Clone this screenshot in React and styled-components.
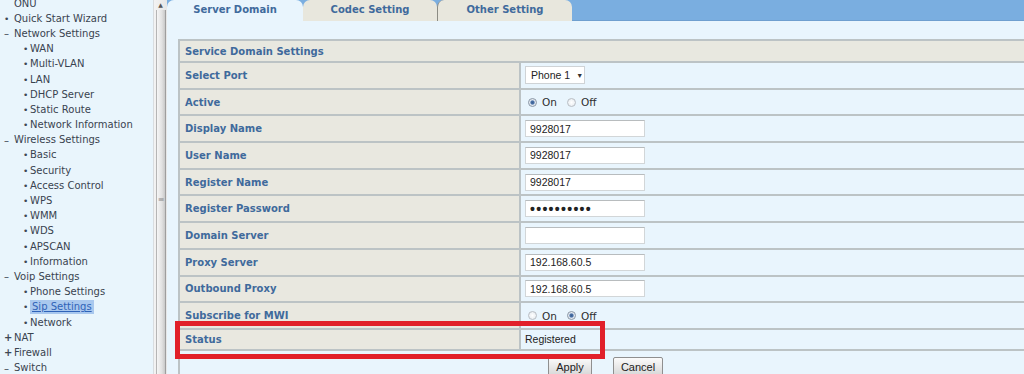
import React from "react";
import styled, { createGlobalStyle } from "styled-components";

const GlobalStyle = createGlobalStyle`
  html, body { margin: 0; padding: 0; background: #e9f5fd; overflow: hidden; }
  * { box-sizing: border-box; }
`;

const Page = styled.div`
  display: flex;
  width: 1024px;
  height: 374px;
  overflow: hidden;
  background: #e9f5fd;
  font-family: "DejaVu Sans", Verdana, sans-serif;
`;

const Sidebar = styled.nav`
  width: 153px;
  flex: none;
  background: #e9f5fc;
  overflow: hidden;
`;

const NavList = styled.ul`
  list-style: none;
  margin: -4px 0 0 0;
  padding: 0;
`;

const NavItem = styled.li`
  display: flex;
  align-items: center;
  height: 15.2px;
  padding-left: ${(p) => (p.$sub ? 23 : 4)}px;
  font-size: 10px;
  color: #39434f;
  white-space: nowrap;
`;

const Marker = styled.span`
  display: inline-block;
  width: ${(p) => (p.$sub ? 7 : 10)}px;
  font-size: ${(p) => (p.$kind === "dot" ? 9 : 10)}px;
  font-weight: ${(p) => (p.$kind === "plus" ? 700 : 400)};
  color: #3d4753;
  text-align: left;
`;

const NavLabel = styled.span`
  padding: 0 ${(p) => (p.$active ? 2 : 0)}px;
  background: ${(p) => (p.$active ? "#a9c8ee" : "transparent")};
  color: ${(p) => (p.$active ? "#2f63b8" : "inherit")};
  text-decoration: ${(p) => (p.$active ? "underline" : "none")};
  line-height: 14px;
`;

const Scrollbar = styled.div`
  width: 14px;
  flex: none;
  display: flex;
  flex-direction: column;
  background: linear-gradient(to right, #f3f3f3, #e6e6e6);
  border-left: 1px solid #d9dde0;
`;

const ScrollArrow = styled.div`
  height: 10px;
  display: flex;
  align-items: center;
  justify-content: center;
  color: #555;
  font-size: 6px;
  line-height: 1;
`;

const ScrollThumb = styled.div`
  flex: 1;
  margin: 0 1px 0 2px;
  background: linear-gradient(to right, #f6f6f6, #e2e2e2 60%, #c9c9c9);
  border-left: 1px solid #b5b5b5;
  border-right: 1px solid #9e9e9e;
  display: flex;
  justify-content: center;
  padding-top: 185px;
  color: #8a8a8a;
  font-size: 8px;
`;

const Main = styled.main`
  flex: 1;
  position: relative;
  display: flex;
  flex-direction: column;
  overflow: hidden;
  min-width: 0;
`;

const TabStrip = styled.div`
  height: 21px;
  flex: none;
  display: flex;
  background: #7aaee0;
  border-bottom: 1px solid #6f9fcf;
`;

const Tab = styled.div`
  width: ${(p) => p.$w}px;
  height: 21px;
  display: flex;
  align-items: center;
  justify-content: center;
  border-radius: 7px 7px 0 0;
  background: ${(p) => (p.$active ? "#e9f5fd" : "#e8e7dd")};
  border-left: ${(p) => (p.$divider ? "1px solid #8c8c84" : "none")};
  font-size: 10px;
  font-weight: 700;
  color: #3f6a9c;
  padding-bottom: 2px;
`;

const Content = styled.div`
  padding: 18px 0 0 11px;
`;

const Table = styled.table`
  border-collapse: collapse;
  width: 900px;
  table-layout: fixed;
`;

const LabelCol = styled.col`
  width: 341px;
`;

const Row = styled.tr`
  height: ${(p) => p.$h}px;
`;

const HeadCell = styled.td`
  background: #e8e8e0;
  border: 2px solid #bcc3c5;
  padding: 0 0 0 5px;
  font-size: 10px;
  font-weight: 700;
  color: #3f6a9c;
`;

const LabelCell = styled.td`
  background: #e9e8e0;
  border: 2px solid #bcc3c5;
  padding: 0 0 0 5px;
  font-size: 10px;
  font-weight: 700;
  color: #3f6a9c;
  white-space: nowrap;
`;

const ValueCell = styled.td`
  background: #e9f5fd;
  border: 2px solid #bcc3c5;
  padding: 0 0 0 4px;
  font-family: "Liberation Sans", Arial, sans-serif;
  font-size: 10.5px;
  color: #222;
`;

const ActionCell = styled.td`
  background: #e9f5fd;
  border-left: 2px solid #bcc3c5;
  vertical-align: top;
  padding: 5px 0 0 368px;
`;

const Field = styled.input`
  display: block;
  width: 120px;
  height: 17px;
  margin: 0;
  padding: 0 4px;
  background: #fff;
  border: 1px solid #d2d6d8;
  border-top-color: #b8bcbe;
  font-family: "Liberation Sans", Arial, sans-serif;
  font-size: ${(p) => (p.$secret ? 14 : 10.5)}px;
  letter-spacing: ${(p) => (p.$secret ? 1.3 : 0)}px;
  font-weight: ${(p) => (p.$secret ? 700 : 400)};
  color: #222;
  outline: none;
`;

const SelectBox = styled.div`
  display: inline-flex;
  align-items: center;
  gap: 6px;
  width: 60px;
  height: 18px;
  padding: 0 0 0 5px;
  background: #fff;
  border: 1px solid #cfd3d6;
  font-family: "Liberation Sans", Arial, sans-serif;
  font-size: 10.5px;
  color: #222;
`;

const Caret = styled.span`
  font-size: 7px;
  color: #333;
`;

const RadioGroup = styled.div`
  display: flex;
  align-items: center;
  font-family: "DejaVu Sans", Verdana, sans-serif;
  font-size: 10.5px;
  color: #2e2e2e;
`;

const RadioDot = styled.span`
  display: inline-block;
  width: 9px;
  height: 9px;
  border-radius: 50%;
  margin: 0 5px 0 3px;
  border: 1px solid ${(p) => (p.$on ? "#8a97a6" : "#b9bfc5")};
  background: ${(p) =>
    p.$on
      ? "radial-gradient(circle, #3b5f91 0, #4a72a8 1.6px, #dfe6ee 2.6px, #f5f7f9 100%)"
      : "radial-gradient(circle, #ffffff 0, #eef1f4 60%, #d6dbe0 100%)"};
`;

const RadioText = styled.span`
  margin-right: 7px;
`;

const Button = styled.button`
  height: 20px;
  width: ${(p) => p.$w}px;
  margin-right: 21px;
  padding: 0;
  border: 1px solid #8f8f8f;
  border-radius: 2px;
  background: linear-gradient(#fbfbfb, #e6e6e6 55%, #d6d6d6);
  font-family: "Liberation Sans", Arial, sans-serif;
  font-size: 11px;
  color: #222;
`;

const Highlight = styled.div`
  position: absolute;
  left: 8px;
  top: 321px;
  width: 430px;
  height: 38px;
  border: 5px solid #e1202a;
  pointer-events: none;
`;

const nav = [
  { t: "ONU", k: "none" },
  { t: "Quick Start Wizard", k: "dot" },
  { t: "Network Settings", k: "minus" },
  { t: "WAN", sub: true },
  { t: "Multi-VLAN", sub: true },
  { t: "LAN", sub: true },
  { t: "DHCP Server", sub: true },
  { t: "Static Route", sub: true },
  { t: "Network Information", sub: true },
  { t: "Wireless Settings", k: "minus" },
  { t: "Basic", sub: true },
  { t: "Security", sub: true },
  { t: "Access Control", sub: true },
  { t: "WPS", sub: true },
  { t: "WMM", sub: true },
  { t: "WDS", sub: true },
  { t: "APSCAN", sub: true },
  { t: "Information", sub: true },
  { t: "Voip Settings", k: "minus" },
  { t: "Phone Settings", sub: true },
  { t: "Sip Settings", sub: true, active: true },
  { t: "Network", sub: true },
  { t: "NAT", k: "plus" },
  { t: "Firewall", k: "plus" },
  { t: "Switch", k: "minus" },
];

const markerChar = { dot: "•", minus: "–", plus: "+", none: "" };

const rows = [
  { label: "Select Port", kind: "select" },
  { label: "Active", kind: "radio", on: true },
  { label: "Display Name", kind: "text", value: "9928017" },
  { label: "User Name", kind: "text", value: "9928017" },
  { label: "Register Name", kind: "text", value: "9928017" },
  { label: "Register Password", kind: "secret" },
  { label: "Domain Server", kind: "text", value: "" },
  { label: "Proxy Server", kind: "text", value: "192.168.60.5" },
  { label: "Outbound Proxy", kind: "text", value: "192.168.60.5" },
  { label: "Subscribe for MWI", kind: "radio", on: false },
];

function Value({ row }) {
  if (row.kind === "select")
    return (
      <SelectBox>
        Phone 1 <Caret>▼</Caret>
      </SelectBox>
    );
  if (row.kind === "radio")
    return (
      <RadioGroup>
        <RadioDot $on={row.on} />
        <RadioText>On</RadioText>
        <RadioDot $on={!row.on} />
        <RadioText>Off</RadioText>
      </RadioGroup>
    );
  if (row.kind === "secret")
    return <Field $secret readOnly value={"\u2022".repeat(10)} />;
  return <Field readOnly value={row.value} />;
}

export default function App() {
  return (
    <>
      <GlobalStyle />
      <Page>
        <Sidebar>
          <NavList>
            {nav.map((n) => (
              <NavItem key={n.t} $sub={n.sub}>
                <Marker $sub={n.sub} $kind={n.sub ? "dot" : n.k}>
                  {n.sub ? "•" : markerChar[n.k]}
                </Marker>
                <NavLabel $active={n.active}>{n.t}</NavLabel>
              </NavItem>
            ))}
          </NavList>
        </Sidebar>
        <Scrollbar>
          <ScrollArrow>▲</ScrollArrow>
          <ScrollThumb>≡</ScrollThumb>
        </Scrollbar>
        <Main>
          <TabStrip>
            <Tab $active $w={136}>Server Domain</Tab>
            <Tab $w={134}>Codec Setting</Tab>
            <Tab $w={135} $divider>Other Setting</Tab>
          </TabStrip>
          <Content>
            <Table>
              <colgroup>
                <LabelCol />
                <col />
              </colgroup>
              <tbody>
                <Row $h={22}>
                  <HeadCell colSpan={2}>Service Domain Settings</HeadCell>
                </Row>
                {rows.map((r) => (
                  <Row key={r.label} $h={26.7}>
                    <LabelCell>{r.label}</LabelCell>
                    <ValueCell>
                      <Value row={r} />
                    </ValueCell>
                  </Row>
                ))}
                <Row $h={21}>
                  <LabelCell>Status</LabelCell>
                  <ValueCell>Registered</ValueCell>
                </Row>
                <Row $h={40}>
                  <ActionCell colSpan={2}>
                    <Button $w={44}>Apply</Button>
                    <Button $w={50}>Cancel</Button>
                  </ActionCell>
                </Row>
              </tbody>
            </Table>
          </Content>
          <Highlight />
        </Main>
      </Page>
    </>
  );
}
